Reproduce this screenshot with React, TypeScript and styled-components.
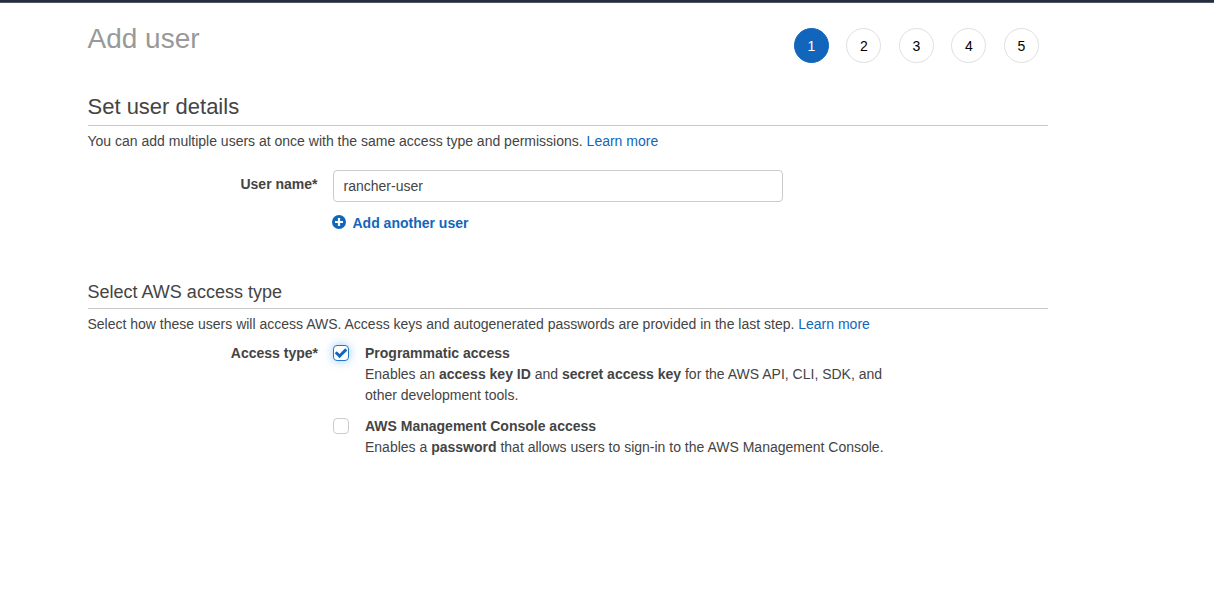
import React, { useState } from "react";
import styled, { createGlobalStyle } from "styled-components";

const GlobalStyle = createGlobalStyle`
  * { box-sizing: border-box; }
  body { margin: 0; background: #fff; color: #444; font: 14px/21px "Liberation Sans", Arial, sans-serif; }
`;
const Page = styled.div`
  height: 595px;
  overflow: hidden;
`;
const TopBar = styled.div`
  height: 3px;
  background: #232f3e;
  border-bottom: 1px solid #4f5965;
`;
const Content = styled.main`
  width: 960px;
  margin-left: 87.5px;
`;
const Header = styled.header`
  display: flex;
  justify-content: space-between;
  height: 90px;
  padding: 18px 9px 0 0;
`;
const Title = styled.h1`
  margin: 0;
  font-size: 28px;
  line-height: 36px;
  font-weight: 400;
  color: #999;
`;
const Steps = styled.div`
  display: flex;
  gap: 17.5px;
  padding-top: 7px;
`;
const Step = styled.div<{ $active?: boolean }>`
  display: flex;
  align-items: center;
  justify-content: center;
  width: 35px;
  height: 35px;
  padding: 1px 0 0 0.6px;
  border-radius: 50%;
  border: 1px solid ${(p) => (p.$active ? "#1166bb" : "#e0e0e0")};
  background: ${(p) => (p.$active ? "#1166bb" : "#fff")};
  color: ${(p) => (p.$active ? "#fff" : "#000")};
`;
const Heading = styled.h2<{ $small?: boolean }>`
  margin: 0 0 5px;
  height: ${(p) => (p.$small ? 29 : 33)}px;
  border-bottom: 1px solid #c8c8c8;
  font-size: ${(p) => (p.$small ? 18 : 22)}px;
  line-height: ${(p) => (p.$small ? 24 : 28)}px;
  font-weight: 400;
`;
const Text = styled.p`
  margin: 0;
`;
const Link = styled.a`
  color: #1166bb;
  text-decoration: none;
`;
const FormRow = styled.div<{ $top: number; $indent?: number }>`
  display: flex;
  gap: 15px;
  margin-top: ${(p) => p.$top}px;
  padding-left: ${(p) => p.$indent || 0}px;
`;
const Label = styled.label<{ $top?: number }>`
  width: 230px;
  padding-top: ${(p) => p.$top || 0}px;
  text-align: right;
  font-weight: 700;
`;
const Input = styled.input`
  display: block;
  width: 450px;
  height: 32px;
  padding: 0 10px;
  border: 1px solid #ccc;
  border-radius: 4px;
  font: inherit;
  color: #444;
  outline: none;
`;
const AddButton = styled.button`
  display: flex;
  align-items: center;
  gap: 7px;
  margin: 11px 0 46px -1px;
  padding: 0;
  border: 0;
  background: none;
  font: inherit;
  font-weight: 700;
  color: #1166bb;
`;
const PlusIcon = styled.svg`
  display: block;
  margin-top: -3px;
`;
const Options = styled.div`
  display: flex;
  flex-direction: column;
  gap: 10px;
`;
const Option = styled.div`
  display: flex;
  gap: 16px;
`;
const Check = styled.button<{ $on: boolean }>`
  display: flex;
  align-items: center;
  justify-content: center;
  width: 16px;
  height: 16px;
  margin-top: 2px;
  padding: 0;
  border: 1px solid ${(p) => (p.$on ? "#2277cc" : "#ccc")};
  border-radius: 4px;
  background: #fff;
  box-shadow: ${(p) => (p.$on ? "0 0 10px rgba(60, 150, 240, 0.5)" : "none")};
`;
const TickIcon = styled.svg`
  display: block;
  flex: none;
`;
const Description = styled.div`
  width: 530px;
`;

export default function App() {
  const [name, setName] = useState("rancher-user");
  const [api, setApi] = useState(true);
  const [web, setWeb] = useState(false);
  const tick = (
    <TickIcon width="14" height="14" viewBox="0 0 1792 1792">
      <path
        fill="#1166bb"
        d="M1671 566q0 40-28 68l-724 724-136 136q-28 28-68 28t-68-28l-136-136-362-362q-28-28-28-68t28-68l136-136q28-28 68-28t68 28l294 295 656-657q28-28 68-28t68 28l136 136q28 28 28 68z"
      />
    </TickIcon>
  );
  return (
    <Page>
      <GlobalStyle />
      <TopBar />
      <Content>
        <Header>
          <Title>Add user</Title>
          <Steps>
            {[1, 2, 3, 4, 5].map((n) => (
              <Step key={n} $active={n === 1}>{n}</Step>
            ))}
          </Steps>
        </Header>
        <Heading>Set user details</Heading>
        <Text>
          You can add multiple users at once with the same access type and permissions. <Link>Learn more</Link>
        </Text>
        <FormRow $top={18}>
          <Label $top={4}>User name*</Label>
          <div>
            <Input value={name} onChange={(e) => setName(e.target.value)} />
            <AddButton>
              <PlusIcon width="14" height="14" viewBox="0 0 14 14">
                <circle cx="7" cy="7" r="7" fill="#1166bb" />
                <path d="M7 3v8M3 7h8" stroke="#fff" strokeWidth="2.2" />
              </PlusIcon>
              Add another user
            </AddButton>
          </div>
        </FormRow>
        <Heading $small>Select AWS access type</Heading>
        <Text>
          Select how these users will access AWS. Access keys and autogenerated passwords are provided in the last step.{" "}
          <Link>Learn more</Link>
        </Text>
        <FormRow $top={8} $indent={0.5}>
          <Label>Access type*</Label>
          <Options>
            <Option>
              <Check $on={api} onClick={() => setApi(!api)}>{api && tick}</Check>
              <Description>
                <b>Programmatic access</b>
                <br />
                Enables an <b>access key ID</b> and <b>secret access key</b> for the AWS API, CLI, SDK, and other
                development tools.
              </Description>
            </Option>
            <Option>
              <Check $on={web} onClick={() => setWeb(!web)}>{web && tick}</Check>
              <Description>
                <b>AWS Management Console access</b>
                <br />
                Enables a <b>password</b> that allows users to sign-in to the AWS Management Console.
              </Description>
            </Option>
          </Options>
        </FormRow>
      </Content>
    </Page>
  );
}
